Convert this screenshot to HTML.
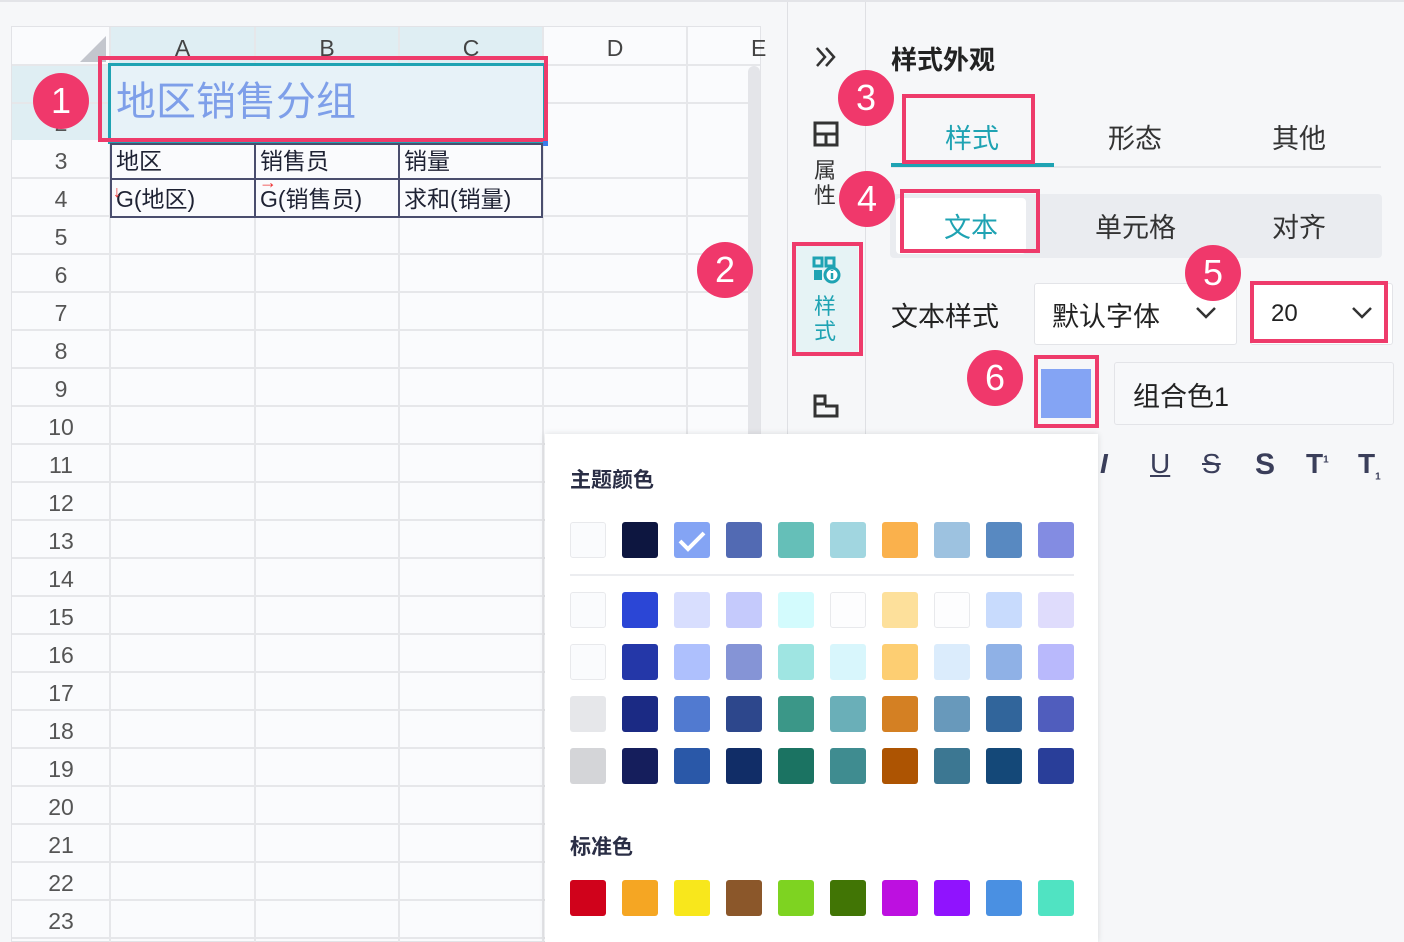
<!DOCTYPE html>
<html><head><meta charset="utf-8">
<style>
*{margin:0;padding:0;box-sizing:border-box}
body{width:1404px;height:942px;overflow:hidden;background:#f6f7f9;font-family:"Liberation Sans","Noto Sans CJK SC",sans-serif;position:relative;color:#2a2e45}
.a{position:absolute}
.hl{position:absolute;height:2px;background:#e6e7ea}
.vl{position:absolute;width:2px;background:#e6e7ea}
.rn{position:absolute;left:12px;width:98px;text-align:center;font-size:23px;color:#555;line-height:38px}
.ch{position:absolute;top:27px;height:37px;text-align:center;font-size:23px;color:#444;line-height:42px}
.badge{position:absolute;width:56px;height:56px;border-radius:50%;background:#f0386b;color:#fff;font-size:36px;text-align:center;line-height:56px}
.pk{position:absolute;border:4px solid #ee3b6b}
.sw{position:absolute;width:36px;height:36px;border-radius:3px}
.cell{position:absolute;font-size:23px;color:#1e2233;line-height:38px;padding-left:5px}
</style></head><body>
<div class="a" style="left:0;top:0;width:1404px;height:2px;background:#e3e4e8"></div>
<div class="a" style="left:11px;top:26px;width:750px;height:916px;background:#fafbfd;border:1px solid #e2e3e7"></div>
<div class="a" style="left:110px;top:27px;width:433px;height:37px;background:#dfeef3"></div>
<div class="a" style="left:12px;top:64px;width:98px;height:76px;background:#dfeef3"></div>
<div class="a" style="left:80px;top:36px;width:0;height:0;border-left:26px solid transparent;border-bottom:26px solid #c3c6cd"></div>
<div class="ch" style="left:110px;width:145px">A</div>
<div class="ch" style="left:255px;width:144px">B</div>
<div class="ch" style="left:399px;width:144px">C</div>
<div class="ch" style="left:543px;width:144px">D</div>
<div class="ch" style="left:687px;width:144px;text-align:left;padding-left:64px">E</div>
<div class="hl" style="left:12px;top:64px;width:748px"></div>
<div class="hl" style="left:12px;top:102px;width:98px"></div><div class="hl" style="left:543px;top:102px;width:217px"></div>
<div class="vl" style="left:109px;top:27px;height:915px"></div>
<div class="vl" style="left:254px;top:27px;height:915px"></div>
<div class="vl" style="left:398px;top:27px;height:915px"></div>
<div class="vl" style="left:542px;top:27px;height:915px"></div>
<div class="vl" style="left:686px;top:27px;height:915px"></div>
<div id="rows"></div>
<div class="rn" style="top:104px">2</div>
<div class="a" style="left:108px;top:63px;width:438px;height:81px;background:#e7f2f8;border:3px solid #1fa3b3"></div>
<div class="a" style="left:116px;top:76px;font-size:40px;color:#7e9fe9;line-height:52px">地区销售分组</div>
<div class="pk" style="left:98px;top:56px;width:450px;height:86px"></div>
<div class="a" style="left:543px;top:141px;width:5px;height:5px;background:#3b7be8"></div>
<div class="a" style="left:110px;top:143px;width:433px;height:75px;border:2px solid #4a4e6e;background:#fafbfd"></div>
<div class="a" style="left:110px;top:178px;width:433px;height:2px;background:#4a4e6e"></div>
<div class="a" style="left:254px;top:143px;width:2px;height:75px;background:#4a4e6e"></div>
<div class="a" style="left:398px;top:143px;width:2px;height:75px;background:#4a4e6e"></div>
<div class="cell" style="left:111px;top:142px">地区</div>
<div class="cell" style="left:255px;top:142px">销售员</div>
<div class="cell" style="left:399px;top:142px">销量</div>
<div class="cell" style="left:111px;top:180px">G(地区)</div>
<div class="cell" style="left:255px;top:180px">G(销售员)</div>
<div class="cell" style="left:399px;top:180px">求和(销量)</div>
<div class="a" style="left:113px;top:184px;color:#e33;font-size:16px">↓</div>
<div class="a" style="left:259px;top:172px;color:#e33;font-size:18px">→</div>
<div class="a" style="left:748px;top:66px;width:12px;height:876px;background:#e4e5e9;border-radius:6px"></div>
<div class="badge" style="left:33px;top:73px">1</div>
<div class="a" style="left:787px;top:2px;width:1px;height:940px;background:#dfe0e4"></div>
<div class="a" style="left:865px;top:2px;width:1px;height:940px;background:#dfe0e4"></div>
<svg class="a" style="left:813px;top:45px" width="26" height="24" viewBox="0 0 26 24"><path d="M4 3l8 9-8 9M13 3l8 9-8 9" fill="none" stroke="#333" stroke-width="2.5"/></svg>
<svg class="a" style="left:813px;top:121px" width="26" height="26" viewBox="0 0 26 26"><rect x="2" y="2" width="22" height="22" fill="none" stroke="#333" stroke-width="3"/><path d="M2 13H24M13 13V24" stroke="#333" stroke-width="3"/></svg>
<div class="a" style="left:814px;top:158px;font-size:22px;line-height:25px;width:24px;color:#333">属<br>性</div>
<div class="a" style="left:796px;top:246px;width:62px;height:106px;background:#e6f3f5"></div>
<svg class="a" style="left:812px;top:256px" width="30" height="28" viewBox="0 0 30 28"><rect x="2" y="2" width="8" height="8" fill="none" stroke="#1fa3b3" stroke-width="3"/><rect x="14" y="2" width="8" height="8" fill="none" stroke="#1fa3b3" stroke-width="3"/><rect x="2" y="14" width="8" height="10" fill="#1fa3b3"/><circle cx="20" cy="19" r="7" fill="#fff" stroke="#1fa3b3" stroke-width="3"/><path d="M20 17v6M20 14v1" stroke="#1fa3b3" stroke-width="2.5"/></svg>
<div class="a" style="left:814px;top:294px;font-size:22px;line-height:25px;width:24px;color:#1fa3b3">样<br>式</div>
<div class="pk" style="left:792px;top:242px;width:71px;height:114px"></div>
<div class="badge" style="left:697px;top:242px">2</div>
<svg class="a" style="left:812px;top:393px" width="28" height="26" viewBox="0 0 28 26"><path d="M3 3h10v8H3zM3 11v12h22v-10H13" fill="none" stroke="#333" stroke-width="3"/></svg>
<div class="a" style="left:891px;top:40px;font-size:26px;font-weight:bold;color:#222">样式外观</div>
<div class="a" style="left:891px;top:166px;width:490px;height:2px;background:#e6e7ea"></div>
<div class="a" style="left:891px;top:163px;width:163px;height:4px;background:#1fa3b3"></div>
<div class="a" style="left:945px;top:117px;font-size:27px;color:#1fa3b3">样式</div>
<div class="a" style="left:1108px;top:117px;font-size:27px;color:#333">形态</div>
<div class="a" style="left:1272px;top:117px;font-size:27px;color:#333">其他</div>
<div class="pk" style="left:902px;top:94px;width:133px;height:70px"></div>
<div class="badge" style="left:838px;top:70px">3</div>
<div class="a" style="left:890px;top:194px;width:492px;height:64px;background:#eaecf0;border-radius:4px"></div>
<div class="a" style="left:896px;top:198px;width:130px;height:56px;background:#fff;border-radius:4px"></div>
<div class="a" style="left:944px;top:206px;font-size:27px;color:#1fa3b3">文本</div>
<div class="a" style="left:1095px;top:206px;font-size:27px;color:#333">单元格</div>
<div class="a" style="left:1272px;top:206px;font-size:27px;color:#333">对齐</div>
<div class="pk" style="left:900px;top:189px;width:140px;height:64px"></div>
<div class="badge" style="left:839px;top:171px">4</div>
<div class="a" style="left:891px;top:295px;font-size:27px;color:#222">文本样式</div>
<div class="a" style="left:1034px;top:283px;width:203px;height:62px;background:#fff;border:1px solid #e3e4e8;border-radius:3px"></div>
<div class="a" style="left:1052px;top:295px;font-size:27px;color:#222">默认字体</div>
<svg class="a" style="left:1194px;top:305px" width="24" height="16"><path d="M3 3l9 9 9-9" fill="none" stroke="#333" stroke-width="2.5"/></svg>
<div class="a" style="left:1250px;top:283px;width:143px;height:62px;background:#fff;border:1px solid #e3e4e8;border-radius:3px"></div>
<div class="a" style="left:1271px;top:300px;font-size:24px;color:#222">20</div>
<svg class="a" style="left:1350px;top:305px" width="24" height="16"><path d="M3 3l9 9 9-9" fill="none" stroke="#333" stroke-width="2.5"/></svg>
<div class="pk" style="left:1250px;top:281px;width:138px;height:62px"></div>
<div class="badge" style="left:1185px;top:245px">5</div>
<div class="a" style="left:1041px;top:369px;width:50px;height:49px;background:#84a4f4"></div>
<div class="pk" style="left:1034px;top:355px;width:65px;height:73px"></div>
<div class="badge" style="left:967px;top:350px">6</div>
<div class="a" style="left:1114px;top:362px;width:280px;height:63px;background:#f7f8fa;border:1px solid #e3e4e8;border-radius:3px"></div>
<div class="a" style="left:1133px;top:375px;font-size:27px;color:#222">组合色1</div>
<div class="a" style="left:1100px;top:448px;font-size:28px;color:#3a3e5a;font-style:italic;font-weight:bold">I</div>
<div class="a" style="left:1150px;top:448px;font-size:28px;color:#3a3e5a;text-decoration:underline">U</div>
<div class="a" style="left:1202px;top:448px;font-size:28px;color:#3a3e5a;text-decoration:line-through">S</div>
<div class="a" style="left:1255px;top:448px;font-size:30px;color:#3a3e5a;font-weight:bold">S</div>
<div class="a" style="left:1306px;top:448px;font-size:28px;color:#3a3e5a;font-weight:bold">T<sup style="font-size:10px">1</sup></div>
<div class="a" style="left:1358px;top:448px;font-size:28px;color:#3a3e5a;font-weight:bold">T<sub style="font-size:10px">1</sub></div>
<div class="a" style="left:545px;top:434px;width:553px;height:508px;background:#fff;box-shadow:0 0 6px rgba(0,0,0,.12)"></div>
<div class="a" style="left:570px;top:464px;font-size:21px;font-weight:bold;color:#2a2e45">主题颜色</div>
<div class="a" style="left:570px;top:574px;width:504px;height:2px;background:#ecedf0"></div>
<div class="a" style="left:570px;top:831px;font-size:21px;font-weight:bold;color:#2a2e45">标准色</div>
<div id="sw"></div>
<svg class="a" style="left:677px;top:530px" width="30" height="22"><path d="M3 11l8 8L27 3" fill="none" stroke="#fff" stroke-width="4"/></svg>
<script>
var r='';
for(var n=3;n<=23;n++){var t=140+(n-3)*38;r+='<div class="rn" style="top:'+(t+2)+'px">'+n+'</div><div class="hl" style="left:12px;top:'+(t+37)+'px;width:748px"></div>';}
document.getElementById('rows').innerHTML=r;
var rows=[
[522,['#fafbfd','#0d1640','#84a4f4','#526ab3','#65bfb8','#a1d6e0','#fab14c','#9dc2e0','#5889c1','#838ce2']],
[592,['#fafbfd','#2b46d6','#d8defe','#c5cafc','#d3fbfd','#fdfdfe','#fde09b','#fdfdfe','#c8dbfd','#dfdcfc']],
[644,['#fafbfd','#2437a8','#aec0fd','#8594d6','#9fe5e2','#d8f6fc','#fdce72','#dbecfc','#8fb1e6','#b9b9fc']],
[696,['#e6e7ea','#1b2a84','#517ad0','#2d478c','#3b9788','#6aafb8','#d48023','#6899bb','#31659b','#505dbd']],
[748,['#d4d5d8','#151e5c','#2a58a8','#112d67','#1b7362','#3f8c90','#ad5402','#3c7792','#144878','#293e99']],
[880,['#d0021b','#f5a623','#f8e71c','#8b572a','#7ed321','#417505','#bd10e0','#9013fe','#4a90e2','#50e3c2']]];
var s='';
rows.forEach(function(q){q[1].forEach(function(c,i){var b=(c=='#fafbfd'||c=='#fdfdfe')?'border:1px solid #e8e9ec;':'';s+='<div class="sw" style="left:'+(570+i*52)+'px;top:'+q[0]+'px;background:'+c+';'+b+'"></div>';});});
document.getElementById('sw').innerHTML=s;
</script>
</body></html>
